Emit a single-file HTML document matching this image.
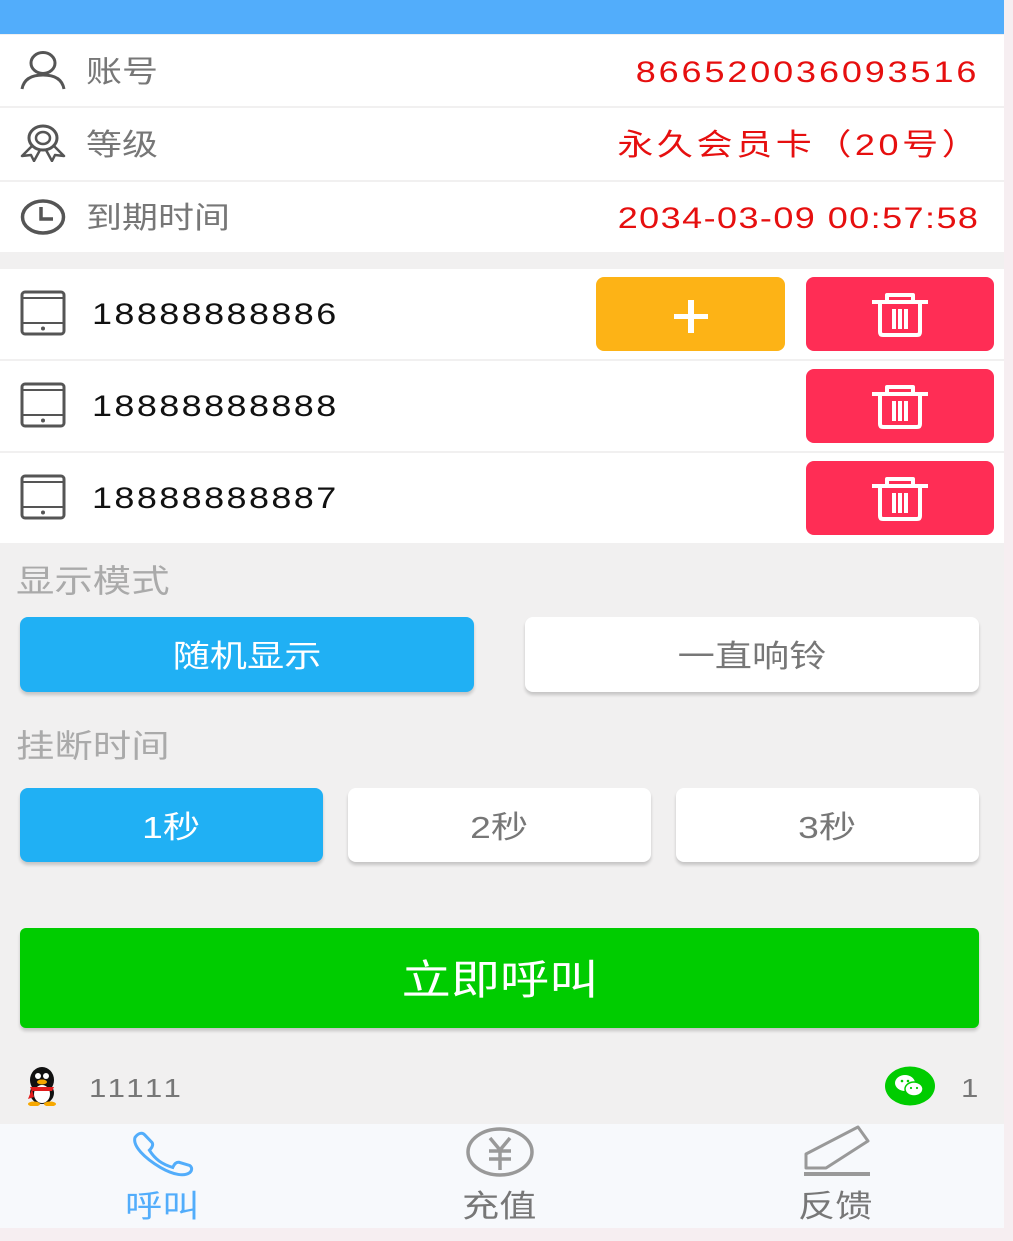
<!DOCTYPE html>
<html><head><meta charset="utf-8"><style>
*{margin:0;padding:0;box-sizing:border-box}
body{width:1013px;height:1241px;background:#f6eef1;font-family:"Liberation Sans","Noto Sans CJK SC",sans-serif;position:relative;overflow:hidden}
.a{position:absolute}
.main{left:0;top:0;width:1004px;height:1228px;background:#f1f0f0}
.row{position:absolute;left:0;width:1004px;background:#fff}
.t{position:absolute;line-height:1;white-space:nowrap;transform:scaleX(1.2);transform-origin:left center}
.r{transform-origin:right center;text-align:right}
.lbl{left:86px;font-size:30px;color:#777}
.val{right:26px;font-size:30px;color:#e60f0f}
.ph{left:92px;font-size:30px;color:#111;letter-spacing:2px}
.btn{position:absolute;border-radius:8px;display:flex;align-items:center;justify-content:center;box-shadow:0 3px 3px rgba(0,0,0,.18)}
.btn span{display:inline-block;transform:scaleX(1.2);font-size:31px;line-height:1;position:relative;top:2px}
.blue{background:#20b0f4;color:#fff}
.white{background:#fff;color:#777}
.del{position:absolute;left:806px;width:188px;height:74px;background:#ff2d55;border-radius:8px;display:flex;align-items:center;justify-content:center}
.sec{left:16px;font-size:32px;color:#aaa}
</style></head><body>
<div class="a main"></div>
<div class="a" style="left:0;top:0;width:1004px;height:34px;background:#52adfb"></div>

<div class="row" style="top:35px;height:71px"></div>
<div class="row" style="top:108px;height:72px"></div>
<div class="row" style="top:182px;height:70px"></div>

<svg class="a" style="left:20px;top:50px" width="46" height="40" viewBox="0 0 46 40"><ellipse cx="23" cy="13" rx="12" ry="10.5" fill="none" stroke="#555" stroke-width="3"/><path d="M2 39 C4 28 13 25 23 25 C33 25 42 28 44 39" fill="none" stroke="#555" stroke-width="3"/></svg>
<div class="t lbl" style="top:58px">账号</div>
<div class="t val r" style="top:58px;right:34px;letter-spacing:2.4px">866520036093516</div>

<svg class="a" style="left:20px;top:124px" width="46" height="38" viewBox="0 0 46 38"><ellipse cx="23" cy="14" rx="14" ry="12" fill="none" stroke="#555" stroke-width="3"/><ellipse cx="23" cy="14" rx="7" ry="6" fill="none" stroke="#555" stroke-width="2.5"/><path d="M12 22 L2 32 L11 31 L14 37 L20 26 M34 22 L44 32 L35 31 L32 37 L26 26" fill="none" stroke="#555" stroke-width="2.5" stroke-linejoin="round"/></svg>
<div class="t lbl" style="top:131px">等级</div>
<div class="t val r" style="top:131px;right:32px;letter-spacing:3px">永久会员卡（20号）</div>

<svg class="a" style="left:20px;top:198px" width="46" height="38" viewBox="0 0 46 38"><ellipse cx="23" cy="19" rx="20.5" ry="16" fill="none" stroke="#555" stroke-width="3.5"/><path d="M21 9 V21 H33" fill="none" stroke="#555" stroke-width="3.5"/></svg>
<div class="t lbl" style="top:204px">到期时间</div>
<div class="t val r" style="top:204px;right:34px;letter-spacing:1.2px">2034-03-09 00:57:58</div>

<div class="row" style="top:269px;height:90px"></div>
<div class="row" style="top:361px;height:90px"></div>
<div class="row" style="top:453px;height:90px"></div>

<svg class="a" style="left:20px;top:290px" width="46" height="46" viewBox="0 0 46 46"><rect x="2" y="2" width="42" height="42" rx="3" fill="none" stroke="#555" stroke-width="3"/><path d="M2 8 H44 M2 33 H44" stroke="#555" stroke-width="2"/><circle cx="23" cy="38.5" r="2" fill="#555"/></svg>
<div class="t ph" style="top:300px">18888888886</div>
<div class="a" style="left:596px;top:277px;width:189px;height:74px;background:#fdb316;border-radius:8px"></div>
<div class="a" style="left:674px;top:314px;width:34px;height:5px;background:#fff"></div>
<div class="a" style="left:688px;top:300px;width:6px;height:33px;background:#fff"></div>

<svg class="a" style="left:20px;top:382px" width="46" height="46" viewBox="0 0 46 46"><rect x="2" y="2" width="42" height="42" rx="3" fill="none" stroke="#555" stroke-width="3"/><path d="M2 8 H44 M2 33 H44" stroke="#555" stroke-width="2"/><circle cx="23" cy="38.5" r="2" fill="#555"/></svg>
<div class="t ph" style="top:392px">18888888888</div>

<svg class="a" style="left:20px;top:474px" width="46" height="46" viewBox="0 0 46 46"><rect x="2" y="2" width="42" height="42" rx="3" fill="none" stroke="#555" stroke-width="3"/><path d="M2 8 H44 M2 33 H44" stroke="#555" stroke-width="2"/><circle cx="23" cy="38.5" r="2" fill="#555"/></svg>
<div class="t ph" style="top:484px">18888888887</div>

<div class="del" style="top:277px"><svg width="60" height="46" viewBox="0 0 60 46"><path d="M2 11 H58 M17 11 V4 H43 V11 M10 11 V41 Q10 44 13 44 H47 Q50 44 50 41 V11 M24 18 V38 M30 18 V38 M36 18 V38" fill="none" stroke="#fff" stroke-width="4" stroke-linejoin="round"/></svg></div>
<div class="del" style="top:369px"><svg width="60" height="46" viewBox="0 0 60 46"><path d="M2 11 H58 M17 11 V4 H43 V11 M10 11 V41 Q10 44 13 44 H47 Q50 44 50 41 V11 M24 18 V38 M30 18 V38 M36 18 V38" fill="none" stroke="#fff" stroke-width="4" stroke-linejoin="round"/></svg></div>
<div class="del" style="top:461px"><svg width="60" height="46" viewBox="0 0 60 46"><path d="M2 11 H58 M17 11 V4 H43 V11 M10 11 V41 Q10 44 13 44 H47 Q50 44 50 41 V11 M24 18 V38 M30 18 V38 M36 18 V38" fill="none" stroke="#fff" stroke-width="4" stroke-linejoin="round"/></svg></div>

<div class="t sec" style="top:565px">显示模式</div>
<div class="btn blue" style="left:20px;top:617px;width:454px;height:75px"><span>随机显示</span></div>
<div class="btn white" style="left:525px;top:617px;width:454px;height:75px"><span>一直响铃</span></div>

<div class="t sec" style="top:730px">挂断时间</div>
<div class="btn blue" style="left:20px;top:788px;width:303px;height:74px"><span>1秒</span></div>
<div class="btn white" style="left:348px;top:788px;width:303px;height:74px"><span>2秒</span></div>
<div class="btn white" style="left:676px;top:788px;width:303px;height:74px"><span>3秒</span></div>

<div class="btn" style="left:20px;top:928px;width:959px;height:100px;background:#00cc00;color:#fff;border-radius:6px"><span style="font-size:41px">立即呼叫</span></div>

<svg class="a" style="left:20px;top:1066px" width="44" height="40" viewBox="0 0 44 40"><ellipse cx="22" cy="14" rx="12" ry="13" fill="#111"/><ellipse cx="22" cy="27" rx="12" ry="11" fill="#111"/><ellipse cx="22" cy="28" rx="8" ry="9" fill="#fff"/><circle cx="18" cy="10" r="3" fill="#fff"/><circle cx="26" cy="10" r="3" fill="#fff"/><ellipse cx="22" cy="16" rx="5" ry="2.5" fill="#f7a800"/><path d="M10 21 H34 L32 25 H12 Z" fill="#e21c1c"/><path d="M12 23 L8 33 L14 31 Z" fill="#e21c1c"/><ellipse cx="14" cy="38" rx="6" ry="2.5" fill="#f7a800"/><ellipse cx="30" cy="38" rx="6" ry="2.5" fill="#f7a800"/></svg>
<div class="t" style="left:89px;top:1075px;font-size:26px;color:#777;letter-spacing:3px">11111</div>
<svg class="a" style="left:884px;top:1066px" width="52" height="40" viewBox="0 0 52 40"><ellipse cx="26" cy="20" rx="25" ry="19.5" fill="#0c0"/><ellipse cx="21" cy="17" rx="10" ry="8" fill="#fff"/><ellipse cx="30" cy="23" rx="9" ry="7" fill="#fff" stroke="#0c0" stroke-width="1.5"/><circle cx="18" cy="15" r="1.3" fill="#0c0"/><circle cx="24" cy="15" r="1.3" fill="#0c0"/><circle cx="27" cy="22" r="1.1" fill="#0c0"/><circle cx="33" cy="22" r="1.1" fill="#0c0"/></svg>
<div class="t" style="left:961px;top:1075px;font-size:26px;color:#777">1</div>

<div class="a" style="left:0;top:1124px;width:1004px;height:104px;background:#f7f9fc"></div>
<svg class="a" style="left:128px;top:1126px" width="72" height="52" viewBox="0 0 72 52"><path d="M6 6 C10 2 14 2 16 5 L22 14 C23 17 21 19 18 21 C22 31 28 37 38 42 C40 39 42 37 45 38 L55 43 C57 45 57 48 54 50 C48 53 38 50 26 40 C12 28 2 14 6 6 Z" transform="translate(4,0) rotate(-10 36 26)" fill="none" stroke="#52adfb" stroke-width="3"/></svg>
<div class="t" style="left:125px;top:1191px;font-size:31px;color:#52adfb">呼叫</div>
<svg class="a" style="left:465px;top:1126px" width="70" height="52" viewBox="0 0 70 52"><ellipse cx="35" cy="26" rx="32" ry="23" fill="none" stroke="#999" stroke-width="3.5"/><path d="M25 12 L35 24 L45 12 M24 25 H46 M24 33 H46 M35 24 V44" fill="none" stroke="#999" stroke-width="3.5"/></svg>
<div class="t" style="left:462px;top:1191px;font-size:31px;color:#777">充值</div>
<svg class="a" style="left:802px;top:1124px" width="70" height="54" viewBox="0 0 70 54"><path d="M4 44 V30 L56 3 L66 17 L24 44 Z" fill="none" stroke="#999" stroke-width="3" stroke-linejoin="round"/><path d="M2 50 H68" stroke="#999" stroke-width="4"/></svg>
<div class="t" style="left:798px;top:1191px;font-size:31px;color:#777">反馈</div>
</body></html>
